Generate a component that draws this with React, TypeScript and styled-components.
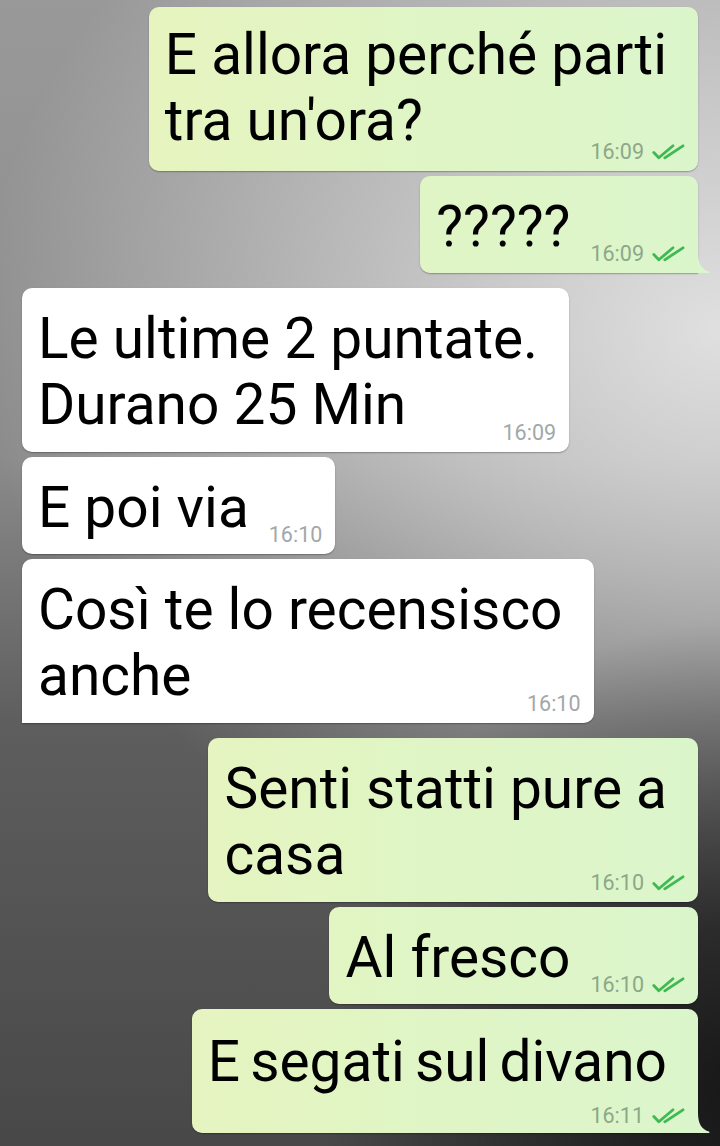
import React from "react";
import styled, { createGlobalStyle, css } from "styled-components";

const GlobalStyle = createGlobalStyle`
  html, body { margin: 0; padding: 0; }
  body { font-family: Roboto, "Noto Sans", sans-serif; background: #4a4a4a; }
`;

const Screen = styled.div`
  width: 720px;
  min-height: 1146px;
  box-sizing: border-box;
  padding: 7px 22px 13px 22px;
  display: flex;
  flex-direction: column;
  gap: 5px;
  overflow: hidden;
  background:
    radial-gradient(ellipse 420px 470px at 740px 1090px, rgba(0,0,0,0.7) 0%, rgba(0,0,0,0.35) 55%, rgba(0,0,0,0) 100%),
    radial-gradient(ellipse 740px 600px at 720px 330px, rgba(255,255,255,0.72) 0%, rgba(255,255,255,0.45) 42%, rgba(255,255,255,0) 100%),
    linear-gradient(to bottom, #999999 0%, #8b8b8b 40%, #5e5e5e 63%, #484848 100%);
`;

type Layout = "inline" | "overlay" | "stack";

const Bubble = styled.div<{ $out: boolean; $tail: boolean; $first: boolean; $layout: Layout; $padTop: number }>`
  position: relative;
  align-self: ${(p) => (p.$out ? "flex-end" : "flex-start")};
  margin-top: ${(p) => (p.$first ? "10px" : "0")};
  padding: ${(p) => p.$padTop}px 13px 10px 16px;
  border-radius: 10px;
  box-shadow: 0 1px 1.5px rgba(0, 0, 0, 0.3);
  background: ${(p) =>
    p.$out
      ? "linear-gradient(90deg, #ecf3bb 0px, #e2f5c3 320px, #dbf5cc 720px) fixed"
      : "#ffffff"};
  ${(p) =>
    p.$tail &&
    (p.$out
      ? css`border-bottom-right-radius: 0;`
      : css`border-bottom-left-radius: 0;`)}
  ${(p) =>
    p.$layout === "inline"
      ? css`
          display: flex;
          align-items: flex-end;
          gap: 20px;
        `
      : p.$layout === "overlay"
      ? css`
          display: grid;
          & > * { grid-area: 1 / 1; }
        `
      : css`
          display: flex;
          flex-direction: column;
        `}
`;

const Text = styled.div<{ $pad: boolean; $wordSpacing: number; $padBottom: number }>`
  font-family: Roboto, "Noto Sans", sans-serif;
  font-size: 56.8px;
  line-height: 66px;
  color: #000;
  white-space: nowrap;
  word-spacing: ${(p) => p.$wordSpacing}px;
  padding-right: ${(p) => (p.$pad ? "18px" : "0")};
  padding-bottom: ${(p) => p.$padBottom}px;
`;

const Meta = styled.div<{ $layout: Layout }>`
  display: flex;
  align-items: center;
  gap: 8px;
  height: 21px;
  justify-self: end;
  align-self: ${(p) => (p.$layout === "stack" ? "flex-end" : "end")};
  margin-top: ${(p) => (p.$layout === "stack" ? "10px" : "0")};
  margin-bottom: ${(p) => (p.$layout === "stack" ? "-3px" : "-1px")};
`;

const Time = styled.span<{ $out: boolean }>`
  font-family: Roboto, "Noto Sans", sans-serif;
  font-size: 21.5px;
  line-height: 21px;
  color: ${(p) => (p.$out ? "#8ca889" : "#a2a8a9")};
`;

const Tail = styled.svg<{ $out: boolean }>`
  position: absolute;
  bottom: 0;
  width: 12px;
  height: 20px;
  ${(p) => (p.$out ? css`right: -12px;` : css`left: -12px;`)}
  overflow: visible;
`;

const Checks = () => (
  <svg width="33" height="16" viewBox="0 0 33 16" fill="none">
    <path d="M1.8 8.5 L6.8 13.8 L21 1.8" stroke="#3fb951" strokeWidth="2.8" strokeLinecap="round" strokeLinejoin="round" />
    <path d="M12.8 13.8 L31 1.8" stroke="#3fb951" strokeWidth="2.8" strokeLinecap="round" strokeLinejoin="round" />
  </svg>
);

type Msg = {
  out: boolean;
  lines: string[];
  time: string;
  layout: Layout;
  tail?: boolean;
  first?: boolean;
  wordSpacing?: number;
  padTop?: number;
  padBottom?: number;
};

const messages: Msg[] = [
  {
    out: true,
    lines: ["E allora perché parti", "tra un'ora?"],
    time: "16:09",
    layout: "overlay",
    padTop: 15,
    padBottom: 7,
  },
  { out: true, lines: ["?????"], time: "16:09", layout: "inline", tail: true },
  { out: false, lines: ["Le ultime 2 puntate.", "Durano 25 Min"], time: "16:09", layout: "overlay", first: true },
  { out: false, lines: ["E poi via"], time: "16:10", layout: "inline" },
  { out: false, lines: ["Così te lo recensisco", "anche"], time: "16:10", layout: "overlay", tail: true },
  { out: true, lines: ["Senti statti pure a", "casa"], time: "16:10", layout: "overlay", first: true },
  { out: true, lines: ["Al fresco"], time: "16:10", layout: "inline" },
  {
    out: true,
    lines: ["E segati sul divano"],
    time: "16:11",
    layout: "stack",
    tail: true,
    wordSpacing: -4,
    padTop: 20,
    padBottom: 0,
  },
];

const Message = ({ m }: { m: Msg }) => (
  <Bubble
    $out={m.out}
    $tail={!!m.tail}
    $first={!!m.first}
    $layout={m.layout}
    $padTop={m.padTop ?? 18}
  >
    <Text
      $pad={m.layout !== "inline"}
      $wordSpacing={m.wordSpacing ?? 0}
      $padBottom={m.padBottom ?? (m.layout === "inline" ? 3 : 4)}
    >
      {m.lines.map((l, i) => (
        <React.Fragment key={i}>
          {i > 0 && <br />}
          {l}
        </React.Fragment>
      ))}
    </Text>
    <Meta $layout={m.layout}>
      <Time $out={m.out}>{m.time}</Time>
      {m.out && <Checks />}
    </Meta>
    {m.tail && (
      <Tail $out={m.out} viewBox="0 0 12 20">
        {m.out ? (
          <path d="M0 0 C0 11 4 16.5 11 18.6 Q12.3 19.2 11 20 L0 20 Z" fill="#dbf5cc" />
        ) : (
          <path d="M12 0 C12 11 8 16.5 1 18.6 Q-0.3 19.2 1 20 L12 20 Z" fill="#ffffff" />
        )}
      </Tail>
    )}
  </Bubble>
);

export default function App() {
  return (
    <>
      <GlobalStyle />
      <Screen>
        {messages.map((m, i) => (
          <Message key={i} m={m} />
        ))}
      </Screen>
    </>
  );
}
